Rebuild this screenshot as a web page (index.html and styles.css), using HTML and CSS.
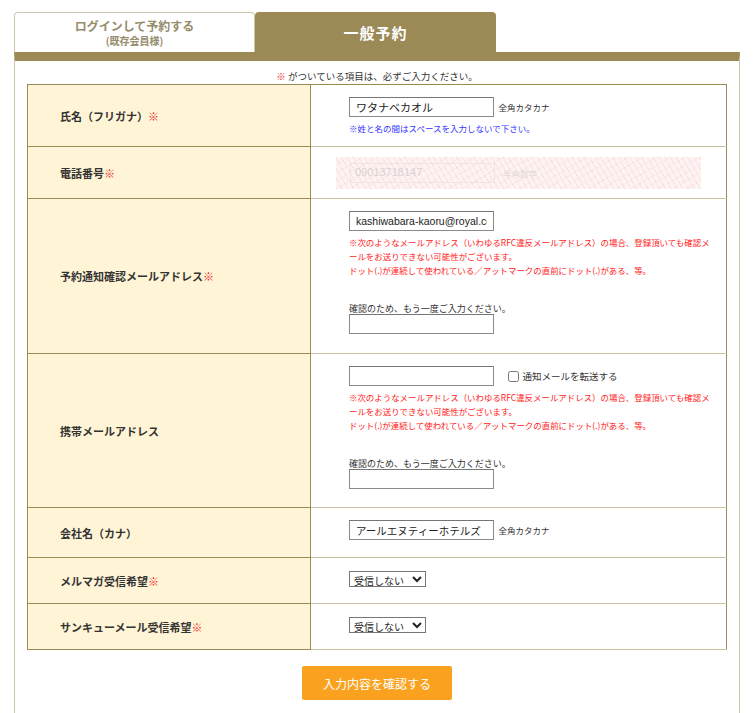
FILE: index.html
```html
<!DOCTYPE html>
<html lang="ja">
<head>
  <meta charset="UTF-8" />
  <title>ご予約情報入力</title>
  <link rel="stylesheet" href="styles.css">
</head>
<body>
  <div class="wrap">
    <div class="tabs">
      <div class="tab tab-login">
        <span class="tab-main">ログインして予約する</span>
        <span class="tab-sub">(既存会員様)</span>
      </div>
      <div class="tab tab-general">一般予約</div>
    </div>

    <div class="panel">
      <p class="req-note"><span class="req">※</span> がついている項目は、必ずご入力ください。</p>

      <table class="form-table">
        <tr class="row-name">
          <th>氏名（フリガナ）<span class="req">※</span></th>
          <td>
            <input type="text" class="txt" value="ワタナベカオル"> <span class="hint">全角カタカナ</span>
            <p class="note-blue">※姓と名の間はスペースを入力しないで下さい。</p>
          </td>
        </tr>
        <tr class="row-tel">
          <th>電話番号<span class="req">※</span></th>
          <td>
            <div class="masked">
              <span class="masked-input">09013718147</span>
              <span class="masked-hint">半角数字</span>
            </div>
          </td>
        </tr>
        <tr class="row-mail">
          <th>予約通知確認メールアドレス<span class="req">※</span></th>
          <td>
            <input type="text" class="txt" value="kashiwabara-kaoru@royal.co.jp">
            <p class="note-red">※次のようなメールアドレス（いわゆるRFC違反メールアドレス）の場合、登録頂いても確認メールをお送りできない可能性がございます。<br>ドット(.)が連続して使われている／アットマークの直前にドット(.)がある、等。</p>
            <p class="confirm">確認のため、もう一度ご入力ください。</p>
            <input type="text" class="txt">
          </td>
        </tr>
        <tr class="row-mail row-mobile">
          <th>携帯メールアドレス</th>
          <td>
            <input type="text" class="txt">
            <label class="check"><input type="checkbox"> 通知メールを転送する</label>
            <p class="note-red">※次のようなメールアドレス（いわゆるRFC違反メールアドレス）の場合、登録頂いても確認メールをお送りできない可能性がございます。<br>ドット(.)が連続して使われている／アットマークの直前にドット(.)がある、等。</p>
            <p class="confirm">確認のため、もう一度ご入力ください。</p>
            <input type="text" class="txt">
          </td>
        </tr>
        <tr class="row-company">
          <th>会社名（カナ）</th>
          <td>
            <input type="text" class="txt" value="アールエヌティーホテルズ"> <span class="hint">全角カタカナ</span>
          </td>
        </tr>
        <tr class="row-select">
          <th>メルマガ受信希望<span class="req">※</span></th>
          <td>
            <select class="sel"><option>受信しない</option><option>受信する</option></select>
          </td>
        </tr>
        <tr class="row-select">
          <th>サンキューメール受信希望<span class="req">※</span></th>
          <td>
            <select class="sel"><option>受信しない</option><option>受信する</option></select>
          </td>
        </tr>
      </table>

      <div class="actions">
        <button type="button" class="confirm-btn">入力内容を確認する</button>
      </div>
    </div>
  </div>
</body>
</html>
```

FILE: styles.css
```css
* {
  margin: 0;
  padding: 0;
  box-sizing: border-box;
}

body {
  font-family: "Noto Sans CJK JP", "Noto Sans", sans-serif;
  font-size: 11px;
  color: #333;
  background: #fff;
}

.wrap {
  padding: 12px 14px 0;
  width: 754px;
}

/* tabs */
.tabs {
  display: flex;
  height: 40px;
}

.tab {
  width: 241px;
  display: flex;
  flex-direction: column;
  align-items: center;
  justify-content: center;
  border-radius: 4px 4px 0 0;
}

.tab-login {
  border: 1px solid #cdc5a8;
  border-bottom: none;
  background: #fff;
  color: #978c6c;
  font-weight: bold;
}

.tab-main {
  font-size: 12px;
  line-height: 14px;
  margin-top: 1px;
}

.tab-sub {
  font-size: 10px;
  line-height: 12px;
  margin-top: 2px;
}

.tab-general {
  background: #9b8a55;
  color: #fff;
  font-size: 15px;
  font-weight: bold;
  letter-spacing: 1px;
  padding-top: 1px;
}

/* panel */
.panel {
  border-top: 9px solid #9b8a55;
  border-left: 1px solid #cdc5a8;
  border-right: 1px solid #cdc5a8;
  padding: 8px 12px 14px;
  min-height: 652px;
}

.req-note {
  text-align: center;
  font-size: 9.5px;
  line-height: 14px;
  margin-bottom: 1px;
}

.req {
  color: #ee3333;
}

/* table */
.form-table {
  width: 700px;
  border-collapse: collapse;
  border: 1px solid #9b8a55;
}

.form-table th {
  width: 284px;
  background: #fff4d6;
  text-align: left;
  font-size: 11px;
  font-weight: bold;
  color: #333;
  padding: 0 0 0 32px;
  border-right: 1px solid #9b8a55;
  border-bottom: 1px solid #9b8a55;
  vertical-align: middle;
}

.form-table td {
  padding: 12px 12px 0 38px;
  border-bottom: 1px solid #cbc2a2;
  vertical-align: top;
}

.row-name td { height: 62px; }
.row-tel td { height: 52px; padding: 10px 25px 0 25px; }
.row-mail td { height: 155px; }
.row-mobile td { height: 154px; }
.row-company td { height: 50px; }
.row-select td { height: 46px; }

.txt {
  width: 145px;
  height: 20px;
  border: 1px solid #8a8a8a;
  border-top-color: #767676;
  padding: 0 6px;
  font-family: "Liberation Sans", "Noto Sans CJK JP", sans-serif;
  font-size: 10.5px;
  color: #222;
  vertical-align: middle;
}

.row-name .txt {
  font-family: "Noto Sans CJK JP", sans-serif;
  font-size: 11px;
}

.hint {
  font-size: 8.5px;
  margin-left: 2px;
  vertical-align: middle;
}

.note-blue {
  color: #3333ff;
  font-size: 8.5px;
  line-height: 12px;
  margin-top: 5px;
}

.note-red {
  color: #ff1a1a;
  font-size: 8.45px;
  line-height: 14px;
  margin-top: 4px;
}

.confirm {
  font-size: 9px;
  line-height: 11px;
  margin-top: 26px;
  margin-bottom: 0;
}

.check {
  font-size: 9.5px;
  margin-left: 12px;
  vertical-align: middle;
}

.check input {
  width: 11px;
  height: 11px;
  margin: 0 1px 0 0;
  vertical-align: -2px;
}

/* the scrambled phone field */
.masked {
  height: 32px;
  width: 365px;
  display: flex;
  align-items: center;
  gap: 8px;
  padding-left: 14px;
  background:
    repeating-linear-gradient(60deg, rgba(240, 170, 170, 0.22) 0 1px, transparent 1px 5px),
    repeating-linear-gradient(-30deg, rgba(240, 180, 180, 0.18) 0 1px, transparent 1px 7px),
    #fdf3f3;
}

.masked-input {
  width: 145px;
  height: 20px;
  border: 1px solid #ece6e6;
  padding: 2px 4px;
  color: #d9d2d2;
  font-family: "Liberation Sans", sans-serif;
  font-size: 11px;
}

.masked-hint {
  color: #e2dada;
  font-size: 8.5px;
}

.sel {
  height: 16px;
  width: 77px;
  font-family: "Noto Sans CJK JP", sans-serif;
  font-size: 10px;
  border: 1px solid #767676;
  color: #222;
  background: #fff;
  margin-top: 1px;
}

/* submit */
.actions {
  text-align: center;
  margin-top: 16px;
}

.confirm-btn {
  width: 150px;
  height: 34px;
  background: #faa21f;
  border: none;
  border-radius: 2px;
  color: #fff;
  font-family: "Noto Sans CJK JP", sans-serif;
  font-size: 12px;
  cursor: pointer;
}
```
